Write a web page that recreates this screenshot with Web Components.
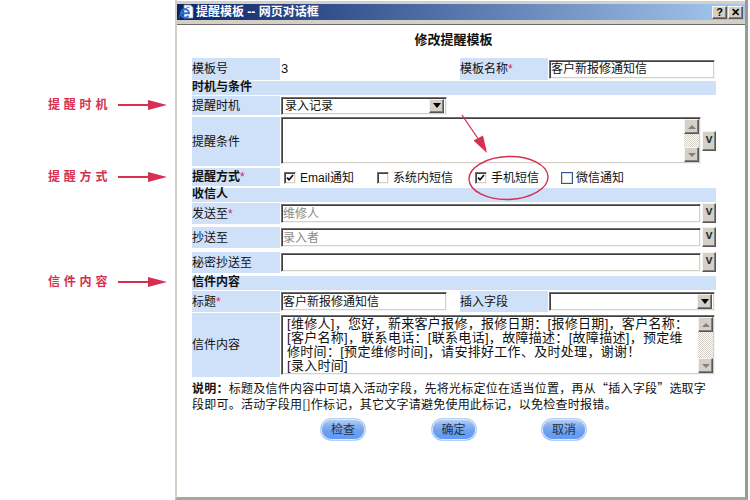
<!DOCTYPE html>
<html lang="zh-CN"><head><meta charset="utf-8"><title>提醒模板</title>
<style>
html,body{margin:0;padding:0;background:#fff}
body{font:12px/16px "Liberation Sans","Noto Sans CJK SC",sans-serif;color:#111;width:750px;height:500px;overflow:hidden}
</style></head><body>
<app-page>
  <side-note slot="side" style="margin-top:97px">提醒时机</side-note>
  <side-note slot="side" style="margin-top:56px">提醒方式</side-note>
  <side-note slot="side" style="margin-top:89px">信件内容</side-note>
  <dlg-window heading="提醒模板 -- 网页对话框">
    <form-title>修改提醒模板</form-title>
    <field-row pair h="22" style="margin-top:10px">
      <span slot="label">模板号</span><span style="font-size:13px">3</span>
      <span slot="label2">模板名称<red-star></red-star></span>
      <sunken-box slot="content2" h="19">客户新报修通知信</sunken-box>
    </field-row>
    <section-bar style="margin-top:1px;height:14px">时机与条件</section-bar>
    <field-row h="19" style="margin-top:1px">
      <span slot="label">提醒时机</span>
      <sunken-box select w="166" h="18">录入记录</sunken-box>
    </field-row>
    <field-row h="49" style="margin-top:2px;align-items:start">
      <span slot="label">提醒条件</span>
      <with-pick pick-top="14">
        <scroll-box h="47"></scroll-box>
      </with-pick>
    </field-row>
    <field-row h="18" style="margin-top:2px">
      <b slot="label">提醒方式<red-star></red-star></b>
      <check-row>
        <check-opt checked style="width:93px">Email通知</check-opt>
        <check-opt style="width:98px">系统内短信</check-opt>
        <check-opt checked style="width:86px">手机短信</check-opt>
        <check-opt blue>微信通知</check-opt>
      </check-row>
    </field-row>
    <section-bar style="margin-top:2px;height:14px">收信人</section-bar>
    <field-row h="21" style="margin-top:1px">
      <span slot="label">发送至<red-star></red-star></span>
      <with-pick><sunken-box muted h="19">维修人</sunken-box></with-pick>
    </field-row>
    <field-row h="21" style="margin-top:3px">
      <span slot="label">抄送至</span>
      <with-pick><sunken-box muted h="19">录入者</sunken-box></with-pick>
    </field-row>
    <field-row h="21" style="margin-top:4px">
      <span slot="label">秘密抄送至</span>
      <with-pick><sunken-box h="19"></sunken-box></with-pick>
    </field-row>
    <section-bar style="margin-top:3px;height:14px">信件内容</section-bar>
    <field-row pair h="21" style="margin-top:1px">
      <span slot="label">标题<red-star></red-star></span>
      <sunken-box w="166" h="19">客户新报修通知信</sunken-box>
      <span slot="label2">插入字段</span>
      <sunken-box slot="content2" select h="19"></sunken-box>
    </field-row>
    <field-row h="64" style="margin-top:1px">
      <span slot="label">信件内容</span>
      <scroll-box h="60" w="434" big>[维修人]，您好，新来客户报修，报修日期：[报修日期]，客户名称：
[客户名称]，联系电话：[联系电话]，故障描述：[故障描述]，预定维
修时间：[预定维修时间]，请安排好工作、及时处理，谢谢！
[录入时间]</scroll-box>
    </field-row>
    <note-text style="margin-top:3px"><b>说明：</b>标题及信件内容中可填入活动字段，先将光标定位在适当位置，再从“插入字段”选取字<br>段即可。活动字段用[]作标记，其它文字请避免使用此标记，以免检查时报错。</note-text>
    <button-row style="margin-top:6px">
      <pill-btn>检查</pill-btn><pill-btn>确定</pill-btn><pill-btn>取消</pill-btn>
    </button-row>
  </dlg-window>
</app-page>
<script>
const def=(name,css,html,extra={})=>{
  customElements.define(name,class extends HTMLElement{
    constructor(){super();const r=this.attachShadow({mode:'open'});
      r.innerHTML=`<style>${css}</style>${typeof html==='function'?html(this):html}`;}
    connectedCallback(){extra.init&&extra.init(this)}
  });
};
const sunk=`border:1px solid;border-color:#707070 #f4f4f2 #f4f4f2 #707070;box-shadow:inset 1px 1px #404040,inset -1px -1px #d4d0c8;box-sizing:border-box;background:#fff;`;
const raised=`box-sizing:border-box;background:#d4d0c8;border:1px solid;border-color:#f4f3ef #555 #555 #f4f3ef;box-shadow:inset -1px -1px #808080;`;

def('app-page',`:host{display:flex;position:relative;width:750px;height:500px}
 .side{width:175px;flex:none;display:flex;flex-direction:column}
 svg{position:absolute;left:0;top:0;pointer-events:none}`,
 `<div class="side"><slot name="side"></slot></div><slot></slot>
 <svg width="750" height="500" viewBox="0 0 750 500">
  <path d="M462 115L481 143" stroke="#d52f52" stroke-width="1.3" fill="none"/>
  <path d="M487 153L473.5 140.5L483 135.5Z" fill="#d52f52"/>
  <ellipse cx="508.5" cy="178" rx="39.5" ry="21.5" transform="rotate(-2 508.5 178)" fill="none" stroke="#d52f52" stroke-width="1.4"/>
 </svg>`);

def('side-note',`:host{display:flex;align-items:center;height:16px;padding-left:48px;flex:none}
 span{width:70px;font:bold 12px/16px "Liberation Sans","Noto Sans CJK SC",sans-serif;letter-spacing:3.8px;color:#d5304f;white-space:nowrap}`,
 `<span><slot></slot></span><svg width="50" height="12" viewBox="0 0 50 12"><path d="M0 6H32" stroke="#d52f52" stroke-width="2"/><path d="M30 1L49 6L30 11Z" fill="#d52f52"/></svg>`);

def('dlg-window',`:host{display:flex;flex-direction:column;box-sizing:border-box;width:573px;height:500px;margin-top:0;background:#fff;
   border:2px solid #d4d0c8;border-top:0;border-right:3px solid #9c9a94;border-bottom:3px solid #a8a69f}
 .top{height:3px;background:#d4d0c8;flex:none;margin-top:1px}
 .bar{height:16px;flex:none;display:flex;align-items:center;background:linear-gradient(90deg,#0a246a,#a6caf0);color:#fff;font-weight:bold;padding-left:1px;white-space:nowrap}
 .bar svg{margin-right:2px;flex:none}
 .btns{margin-left:auto;display:flex;gap:1px;margin-right:2px}
 .btns span{${raised}width:15px;height:13px;color:#000;font:bold 11px/11px "Liberation Sans",sans-serif;text-align:center}
 .sep{height:5px;flex:none;background:#d4d0c8;border-bottom:1px solid #6a6a6a;box-sizing:border-box}
 .body{flex:1;padding:7px 0 0 15px;display:flex;flex-direction:column;width:524px}`,
 el=>`<div class="top"></div><div class="bar">
   <svg width="16" height="16" viewBox="0 0 16 16"><path d="M6 1H12.5L15 3.5V14H6Z" fill="#fff" stroke="#9a9a9a" stroke-width=".8"/><path d="M3.5 9.2H11C11 6.4 8.8 5.2 6.9 5.2 4.8 5.2 3 7 3 9.4 3 12 5 13.6 7.2 13.6 8.8 13.6 10 12.8 10.6 11.6" fill="none" stroke="#2b6fd8" stroke-width="1.9"/><path d="M1 14.5C1.4 9.5 6 4 11.5 3" fill="none" stroke="#2b6fd8" stroke-width="1"/></svg>
   <span>${el.getAttribute('heading')}</span>
   <div class="btns"><span>?</span><span>✕</span></div></div><div class="sep"></div><div class="body"><slot></slot></div>`);

def('form-title',`:host{display:block;height:16px;line-height:16px;font-size:13px;text-align:center;font-weight:bold;margin-left:-1px;flex:none}`,`<slot></slot>`);

def('field-row',`:host{display:grid;grid-template-columns:88px 1fr;flex:none;align-items:center;height:var(--h)}
 :host([pair]){grid-template-columns:88px 180px 88px 167px}
 .l{background:#cfe1f9;align-self:stretch;display:flex;align-items:center;white-space:nowrap;height:var(--h)}
 .c{padding-left:1px;display:flex;align-items:center;min-width:0}
 .c2{padding-left:1px;display:flex;align-items:center}`,
 el=>`<div class="l"><slot name="label"></slot></div><div class="c"><slot></slot></div>`+
  (el.hasAttribute('pair')?`<div class="l"><slot name="label2"></slot></div><div class="c2"><slot name="content2"></slot></div>`:''),
 {init(el){el.style.setProperty('--h',el.getAttribute('h')+'px')}});

def('section-bar',`:host{display:block;background:#cfe1f9;font-weight:bold;line-height:13px;flex:none;width:524px}`,`<slot></slot>`);
def('red-star',`:host{display:inline;color:#e0233c;font-weight:normal}`,`*`);

def('sunken-box',`:host{${sunk}display:flex;align-items:center;flex:1;min-width:0;padding:0 1px;white-space:nowrap;overflow:hidden;height:var(--h);width:var(--w,auto);flex:var(--f,1)}
 :host([muted]){color:#8a8a8a}
 :host([select]){padding:0 2px 0 3px}
 .t{flex:1}
 .b{${raised}width:15px;height:calc(100% - 2px);flex:none;display:flex;align-items:center;justify-content:center}
 .b i{border:4px solid transparent;border-top:5px solid #000;border-bottom:0;display:block}`,
 el=>`<span class="t"><slot></slot></span>`+(el.hasAttribute('select')?`<span class="b"><i></i></span>`:''),
 {init(el){el.style.setProperty('--h',el.getAttribute('h')+'px');
   if(el.hasAttribute('w')){el.style.setProperty('--w',el.getAttribute('w')+'px');el.style.setProperty('--f','none')}}});

def('with-pick',`:host{display:flex;flex:1;align-items:flex-start;width:435px;gap:1px}
 .box{flex:1;min-width:0;display:flex}
 .v{${raised}width:14px;height:var(--vh,20px);margin-top:var(--vt,-1px);flex:none;font:bold 12px/16px "Liberation Mono",monospace;text-align:center;color:#333}`,
 `<div class="box"><slot></slot></div><div class="v">v</div>`,
 {init(el){if(el.hasAttribute('pick-top')){el.style.setProperty('--vt',el.getAttribute('pick-top')+'px')}}});

def('scroll-box',`:host{${sunk}display:flex;flex:1;height:var(--h);width:var(--w,auto);flex:var(--f,1);padding:1px 1px 1px 0;align-items:stretch}
 .t{flex:1;padding:0 0 0 5px;white-space:pre;overflow:hidden;line-height:14.5px}
 :host([big]) .t{font-size:13px;line-height:14px;letter-spacing:.3px}
 .bar{width:15px;flex:none;display:flex;flex-direction:column;background:repeating-conic-gradient(#d4d0c8 0 25%,#fff 0 50%) 0 0/2px 2px}
 .a{${raised}height:15px;flex:none;display:flex;align-items:center;justify-content:center}
 .a i{display:block;border:4px solid transparent;border-top:0;border-bottom:4px solid #808080}
 .a.d i{border-top:4px solid #808080;border-bottom:0}
 .s{flex:1}`,
 `<div class="t"><slot></slot></div><div class="bar"><div class="a"><i></i></div><div class="s"></div><div class="a d"><i></i></div></div>`,
 {init(el){el.style.setProperty('--h',el.getAttribute('h')+'px');
   if(el.hasAttribute('w')){el.style.setProperty('--w',el.getAttribute('w')+'px');el.style.setProperty('--f','none')}}});

def('check-row',`:host{display:flex;align-items:center;padding-left:3px;padding-top:1px}`,`<slot></slot>`);
def('check-opt',`:host{display:flex;align-items:center;gap:4px;white-space:nowrap;flex:none}
 :host([blue]){gap:3px}
 .k{${sunk}width:12px;height:12px;flex:none;display:block}
 :host([blue]) .k{border:1px solid #33588f;box-shadow:inset 0 0 0 1px #dcdcd8}`,
 el=>`<svg class="k" viewBox="0 0 10 10" width="12" height="12">${el.hasAttribute('checked')?'<path d="M2 4.6L4 6.8L8 2" fill="none" stroke="#111" stroke-width="1.7"/>':''}</svg><span><slot></slot></span>`);

def('note-text',`:host{display:block;width:524px;line-height:16px;letter-spacing:.24px;white-space:nowrap;flex:none;font-family:"Noto Sans CJK SC","Liberation Sans",sans-serif}`,`<slot></slot>`);
def('button-row',`:host{display:flex;gap:64.5px;padding-left:128px;flex:none}`,`<slot></slot>`);
def('pill-btn',`:host{display:flex;align-items:center;justify-content:center;box-sizing:border-box;width:46px;height:23px;border-radius:11px;border:1px solid #b6d1f6;
  background:linear-gradient(#bcd3f6,#8cb3ee 30%,#6c9fee 60%,#5f9bf8);box-shadow:inset 0 0 0 1px #dbe8fb;color:#24324c;flex:none}`,`<slot></slot>`);
</script>
</body></html>
